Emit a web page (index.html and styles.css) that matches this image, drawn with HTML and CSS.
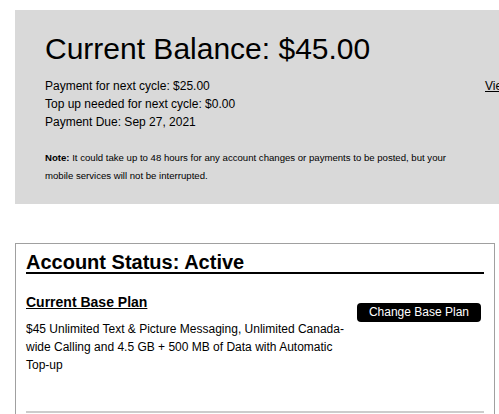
FILE: index.html
```html
<!doctype html>
<html lang="en">
  <head>
    <meta charset="UTF-8" />
    <meta name="viewport" content="width=device-width, initial-scale=1.0" />
    <title>My Account</title>
    <link rel="stylesheet" href="styles.css">
  </head>
  <body>
    <div class="page">
      <section class="balance">
        <h1>Current Balance: $45.00</h1>
        <div class="balance-row">
          <ul class="balance-details">
            <li>Payment for next cycle: $25.00</li>
            <li>Top up needed for next cycle: $0.00</li>
            <li>Payment Due: Sep 27, 2021</li>
          </ul>
          <a class="history-link" href="#">View Payment History</a>
        </div>
        <p class="note">
          <strong>Note:</strong> It could take up to 48 hours for any account changes or payments to be posted, but your mobile services will not be interrupted.
        </p>
      </section>

      <section class="account">
        <h2>Account Status: Active</h2>

        <div class="plan-row">
          <div class="plan-info">
            <h3>Current Base Plan</h3>
            <p>
              $45 Unlimited Text &amp; Picture Messaging, Unlimited Canada-wide Calling and 4.5 GB + 500 MB of Data with Automatic Top-up
            </p>
          </div>
          <button class="plan-btn">Change Base Plan</button>
        </div>

        <div class="addons">
          <h3>Add-ons</h3>
          <p>No add-ons on this account.</p>
        </div>
      </section>
    </div>
  </body>
</html>
```

FILE: styles.css
```css
* {
  box-sizing: border-box;
  margin: 0;
  padding: 0;
}

html,
body {
  overflow-x: hidden;
}

body {
  font-family: "Liberation Sans", Arial, sans-serif;
  color: #000;
  background: #fff;
}

.page {
  padding: 10px 0 0 15px;
}

/* balance summary */

.balance {
  width: 640px;
  background: #d9d9d9;
  padding: 22px 30px 19px;
}

.balance h1 {
  font-size: 30px;
  font-weight: normal;
  line-height: 34px;
  margin-bottom: 11px;
}

.balance-row {
  display: flex;
  align-items: flex-start;
}

.balance-details {
  list-style: none;
  width: 440px;
  font-size: 12px;
  line-height: 18px;
}

.history-link {
  color: #000;
  font-size: 12px;
  line-height: 18px;
  text-decoration: underline;
}

.note {
  margin-top: 18px;
  width: 420px;
  font-size: 9.6px;
  line-height: 18px;
}

/* account status card */

.account {
  width: 480px;
  margin-top: 39px;
  border: 1px solid #a0a0a0;
  padding: 8px 10px 20px;
}

.account h2 {
  font-size: 20px;
  line-height: 20px;
  border-bottom: 2px solid #000;
}

.plan-row {
  display: flex;
  justify-content: space-between;
  align-items: flex-start;
  margin-top: 20px;
}

.plan-info {
  width: 322px;
}

.account h3 {
  font-size: 14px;
  line-height: 16px;
  text-decoration: underline;
  margin-bottom: 10px;
}

.account p {
  font-size: 12px;
  line-height: 18px;
}

.plan-btn {
  margin: 9px 3px 0 0;
  background: #000;
  color: #fff;
  border: none;
  border-radius: 4px;
  padding: 2px 12px;
  font-family: inherit;
  font-size: 12px;
  line-height: 15px;
  cursor: pointer;
}

.addons {
  margin-top: 37px;
  border-top: 2px solid #ccc;
  padding-top: 30px;
}
```
